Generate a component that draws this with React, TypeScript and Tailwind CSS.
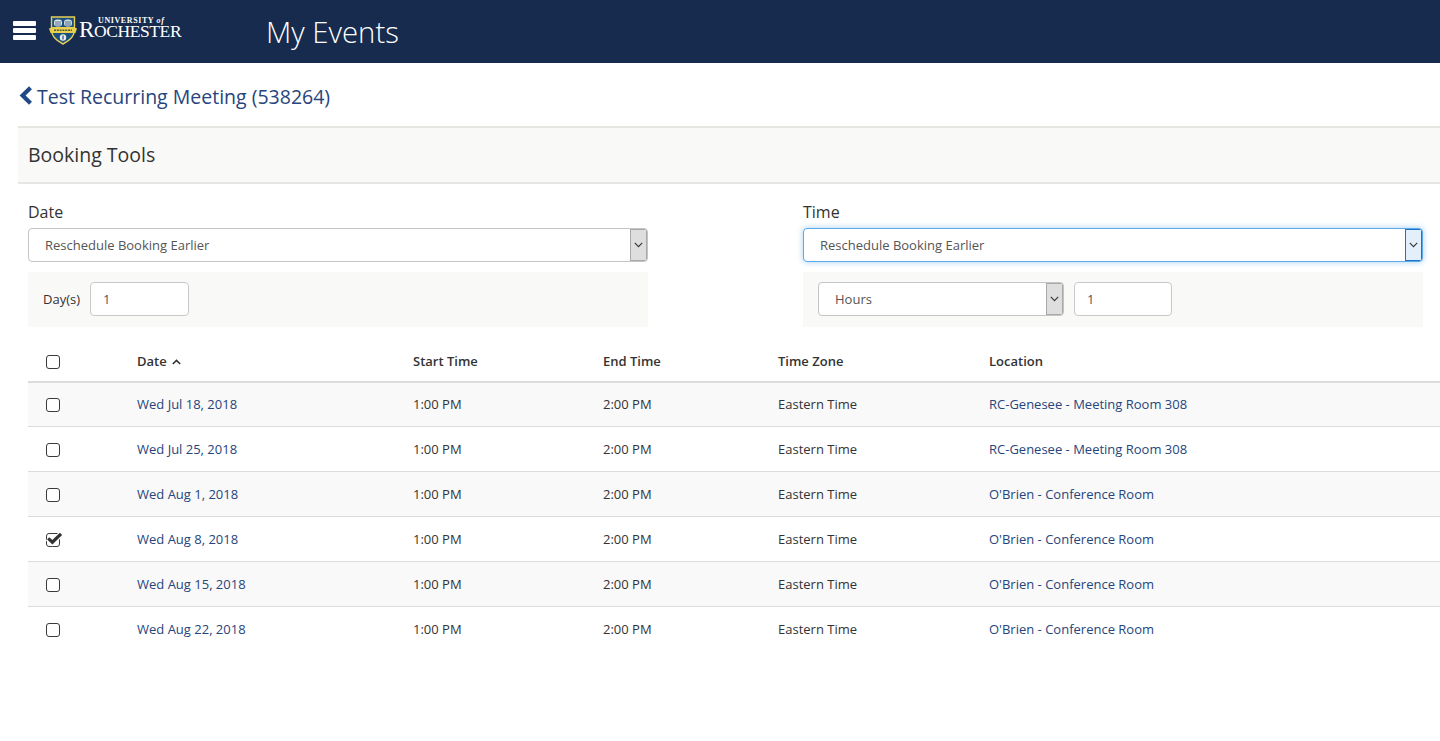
import React from 'react';

const rows = [
  { date: 'Wed Jul 18, 2018', location: 'RC-Genesee - Meeting Room 308' },
  { date: 'Wed Jul 25, 2018', location: 'RC-Genesee - Meeting Room 308' },
  { date: 'Wed Aug 1, 2018', location: "O'Brien - Conference Room" },
  { date: 'Wed Aug 8, 2018', location: "O'Brien - Conference Room", checked: true },
  { date: 'Wed Aug 15, 2018', location: "O'Brien - Conference Room" },
  { date: 'Wed Aug 22, 2018', location: "O'Brien - Conference Room" },
];

const Chevron = () => (
  <svg width="9" height="6" viewBox="0 0 9 6" fill="none" stroke="#333" strokeWidth="1.1">
    <path d="M0.8 0.8 L4.5 4.6 L8.2 0.8" />
  </svg>
);

const Shield = () => (
  <svg width="28" height="29" viewBox="0 0 28 29">
    <path d="M2.5 1 H25.5 V14 C25.5 21 20 25 14 28 C8 25 2.5 21 2.5 14 Z" fill="#1d4f7c" stroke="#e6cf55" strokeWidth="1.4" />
    <rect x="5" y="3.5" width="8" height="7" rx="3" fill="#dfe6ea" />
    <rect x="15" y="3.5" width="8" height="7" rx="3" fill="#cfdbe2" />
    <path d="M7 5 V10 M9 5 V10 M11 5 V10 M17 5 V10 M19 5 V10 M21 5 V10" stroke="#27557d" strokeWidth="0.8" />
    <path d="M0 12.5 L3.5 11 H24.5 L28 12.5 L26.5 17 H1.5 Z" fill="#e8d04e" />
    <path d="M5 14.2 H23" stroke="#4a5a3a" strokeWidth="1.4" strokeDasharray="2 0.8" />
    <circle cx="14" cy="21.5" r="3.2" fill="#e8edf0" />
    <path d="M14 19.5 V23.5" stroke="#1d4f7c" strokeWidth="1.2" />
  </svg>
);

const Checkbox = ({ checked }: { checked?: boolean }) => (
  <div className="relative h-[14px] w-[14px] rounded-[3px] border-[1.5px] border-[#3a3a3a] bg-white">
    {checked && (
      <svg className="absolute -left-[2px] -top-[2px]" width="20" height="16" viewBox="0 0 20 16" fill="none">
        <path d="M2.6 6.4 L7.4 10.6 L16.4 1.6" stroke="white" strokeWidth="5.6" />
        <path d="M3.2 6.4 L7.4 10.2 L16 1.8" stroke="#333" strokeWidth="3.2" />
      </svg>
    )}
  </div>
);

const Select = ({ label, width, focused }: { label: string; width: string; focused?: boolean }) => (
  <div
    className={`flex h-[34px] items-stretch overflow-hidden rounded-[4px] border bg-white ${width} ${
      focused ? 'border-[#5ea9e6] shadow-[0_0_6px_rgba(102,175,233,0.6)]' : 'border-[#c4c4c4]'
    }`}
  >
    <div className="flex flex-1 items-center pl-4 pt-[1px] text-[13px] text-[#555]">{label}</div>
    <div
      className={`flex w-[17px] items-center justify-center border-[1px] ${
        focused ? 'border-[#1b74c5] bg-[#e3f0fb]' : 'border-[#a9a9a9] bg-[#dedede]'
      }`}
    >
      <Chevron />
    </div>
  </div>
);

const NumberBox = ({ width }: { width: string }) => (
  <div className={`flex h-[34px] items-center rounded-[4px] border border-[#c9c9c9] bg-white pl-3 pt-[1px] text-[13px] text-[#555] ${width}`}>
    1
  </div>
);

const gridCols = 'grid grid-cols-[109px_276px_190px_175px_211px_1fr] items-center';

export default function App() {
  return (
    <div className="min-h-[741px] bg-white font-['Open_Sans',sans-serif] text-[#333]">
      <header className="flex h-[63px] items-center bg-[#162b4e] text-white">
        <div className="ml-[13px] mb-[2px] flex w-[23px] flex-col gap-[2px]">
          <span className="h-[5px] rounded-[1px] bg-white" />
          <span className="h-[5px] rounded-[1px] bg-white" />
          <span className="h-[5px] rounded-[1px] bg-white" />
        </div>
        <div className="ml-[13px] mb-[3px] flex w-[133px] items-center gap-[2px]">
          <Shield />
          <div className="mb-[3px] flex flex-col font-['Liberation_Serif',serif] leading-none">
            <span className="ml-[19px] -mb-[7px] whitespace-nowrap text-[8px] font-bold tracking-[0.6px]">
              UNIVERSITY <em className="font-bold">of</em>
            </span>
            <span className="whitespace-nowrap text-[17.5px] tracking-[-0.4px]">
              <span className="text-[23px]">R</span>OCHESTER
            </span>
          </div>
        </div>
        <h1 className="ml-[84px] pt-[2px] text-[29.3px] font-light">My Events</h1>
      </header>

      <div className="pl-[18px]">
        <div className="flex h-[65px] items-center border-b-2 border-[#e6e6e2] pt-[5px]">
          <svg width="14" height="19" viewBox="0 0 14 19" className="ml-[1px] -mt-[3px]">
            <path d="M11.5 1.8 L3.6 9.5 L11.5 17.2" fill="none" stroke="#204a87" strokeWidth="4.2" />
          </svg>
          <span className="ml-[4px] text-[19.5px] text-[#27457c]">Test Recurring Meeting (538264)</span>
        </div>

        <div className="flex h-[56px] items-center border-b-2 border-[#e6e6e2] bg-[#f9f9f7] pl-[10px] text-[19.5px]">
          Booking Tools
        </div>

        <div className="flex pl-[10px] pt-[17px] pr-[17px]">
          <div className="w-[620px]">
            <div className="h-[27px] text-[16px] leading-[22px]">Date</div>
            <Select label="Reschedule Booking Earlier" width="w-full" />
            <div className="mt-[10px] flex h-[55px] items-center bg-[#f9f9f7] pb-[1px] pl-[15px]">
              <span className="pt-[1px] text-[13px]">Day(s)</span>
              <NumberBox width="ml-[10px] w-[99px]" />
            </div>
          </div>
          <div className="ml-[155px] flex-1">
            <div className="h-[27px] text-[16px] leading-[22px]">Time</div>
            <Select label="Reschedule Booking Earlier" width="w-full" focused />
            <div className="mt-[10px] flex h-[55px] items-center gap-[10px] bg-[#f9f9f7] pb-[1px] pl-[15px]">
              <Select label="Hours" width="w-[246px]" />
              <NumberBox width="w-[98px]" />
            </div>
          </div>
        </div>

        <div className="ml-[10px] mt-[10px]">
          <div className={`${gridCols} h-[46px] border-b-2 border-[#dcdcdc] pt-[6px] text-[13px] font-semibold`}>
            <div className="pl-[18px]">
              <Checkbox />
            </div>
            <div className="flex items-center gap-[5px]">
              Date
              <svg width="9" height="6" viewBox="0 0 9 6" fill="none" stroke="#333" strokeWidth="1.6">
                <path d="M0.8 5 L4.5 1.4 L8.2 5" />
              </svg>
            </div>
            <div>Start Time</div>
            <div>End Time</div>
            <div>Time Zone</div>
            <div>Location</div>
          </div>
          {rows.map((row, i) => (
            <div
              key={row.date}
              className={`${gridCols} border-b text-[13px] ${i === 0 ? 'h-[44px]' : 'h-[45px] pt-[1px]'} ${
                i < rows.length - 1 ? 'border-[#dcdcdc]' : 'border-transparent'
              } ${i % 2 === 0 ? 'bg-[#f9f9f9]' : 'bg-white'}`}
            >
              <div className="pl-[18px]">
                <Checkbox checked={row.checked} />
              </div>
              <div className="text-[#27457c]">{row.date}</div>
              <div>1:00 PM</div>
              <div>2:00 PM</div>
              <div>Eastern Time</div>
              <div className="text-[#27457c]">{row.location}</div>
            </div>
          ))}
        </div>
      </div>
    </div>
  );
}
